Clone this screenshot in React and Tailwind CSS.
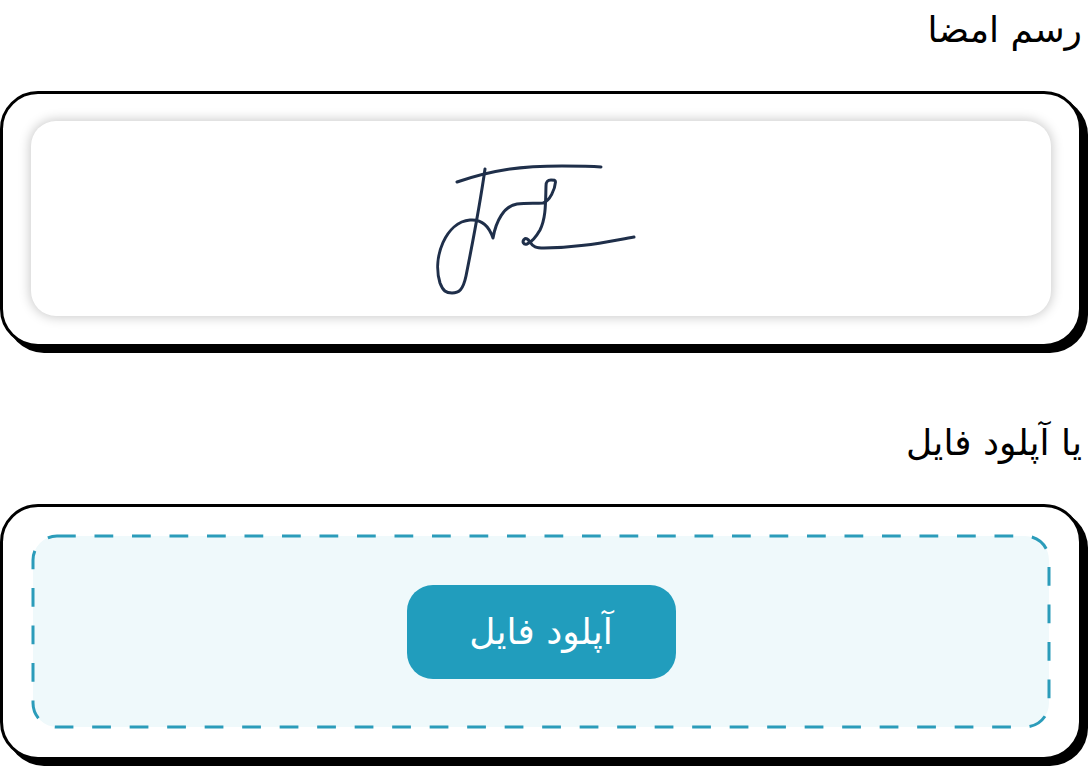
import React from "react";

function Panel({ title, children }) {
  return (
    <section>
      <h2 className="h-[91px] px-[6px] pt-1 text-[36px] leading-[52px] font-normal text-black">
        {title}
      </h2>
      <div className="mr-[6px] rounded-[38px] border-[3px] border-black bg-white px-7 pt-[27px] pb-7 shadow-[6px_6px_0_0_#000]">
        {children}
      </div>
    </section>
  );
}

function Signature() {
  return (
    <svg
      viewBox="426 139 230 160"
      className="h-[160px] w-[230px]"
      fill="none"
      stroke="#1f2f4a"
      strokeWidth="3"
      strokeLinecap="round"
      strokeLinejoin="round"
      role="img"
      aria-label="امضا"
    >
      <path d="M457 182C492 170 520 166 562 166C577 166 589 166 601 167" />
      <path d="M485 169C480 204 472 246 466 276C463 290 459 293 452 293C446 293 443 291 440 283C432 257 446 222 470 220C482 219 489 226 493 238C496 221 504 206 517 204C526 203 535 203.500 543 203C550 201 555 189 555.500 182C555.500 180 554 180 551 180C547 180 546 182 546 186C545.500 203 546 218 540 230C536 237 532 242 527 244C523.500 245 522 242 524 239.500C526 237.500 528 239 530 242C533 247 536 248 544 248C578 248 605 242 634 237" />
    </svg>
  );
}

export default function App() {
  return (
    <main
      dir="rtl"
      lang="fa"
      className="flex flex-col gap-[66px] bg-white pb-[6px] font-['DejaVu_Sans',sans-serif]"
    >
      <Panel title="رسم امضا">
        <div className="flex h-[195px] items-center justify-center rounded-[25px] bg-white shadow-[0_0_12px_1px_rgba(0,0,0,0.22)]">
          <Signature />
        </div>
      </Panel>
      <Panel title="یا آپلود فایل">
        <div className="relative flex h-[195px] items-center justify-center">
          <svg className="absolute inset-0 h-full w-full" aria-hidden="true">
            <rect
              x="2"
              y="2"
              rx="24"
              className="h-[calc(100%-4px)] w-[calc(100%-4px)]"
              fill="#eff9fb"
              stroke="#2b9cba"
              strokeWidth="3"
              strokeDasharray="18.75"
            />
          </svg>
          <button
            type="button"
            className="relative h-[94px] w-[269px] rounded-[26px] bg-[#219dbd] text-[36px] leading-[52px] text-white"
          >
            آپلود فایل
          </button>
        </div>
      </Panel>
    </main>
  );
}
